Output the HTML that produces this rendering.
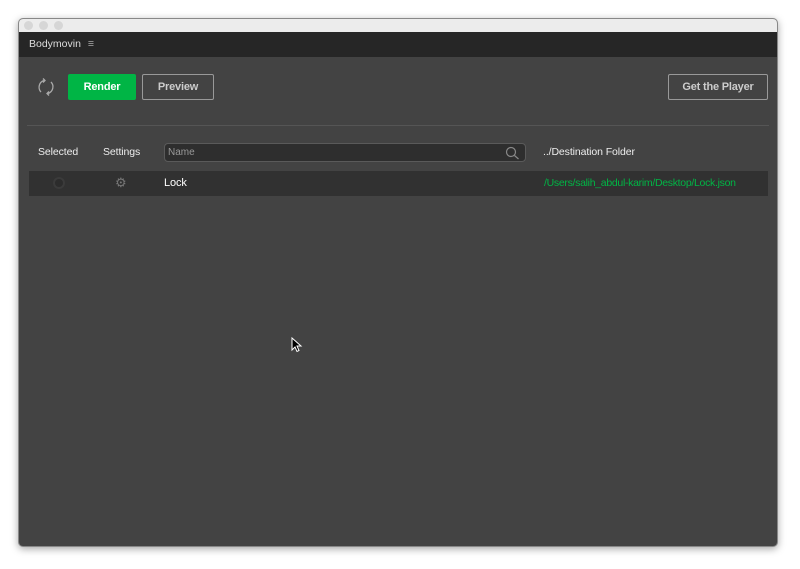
<!DOCTYPE html>
<html><head><style>
*{margin:0;padding:0;box-sizing:border-box}
body{width:800px;height:569px;background:#fff;font-family:"Liberation Sans",Arial,sans-serif;position:relative;overflow:hidden}
.win{position:absolute;left:18px;top:18px;width:760px;height:529px;background:#434343;border-radius:5px;overflow:hidden;box-shadow:0 2px 8px rgba(0,0,0,.35);border:1px solid #888}
.tb{height:13px;background:#ececec;position:relative}
.dot{position:absolute;top:2px;width:9px;height:9px;border-radius:50%;background:#d6d6d6}
.hd{height:25px;background:#262626;color:#ddd;font-size:10.5px;line-height:25px;padding-left:10px}
.abs{position:absolute}
.btn{position:absolute;height:26px;border-radius:2px;font-size:11px;font-weight:bold;text-align:center;line-height:24px;letter-spacing:-.2px}
.lbl{position:absolute;color:#eee;font-size:10.5px;letter-spacing:-.1px}
</style></head><body>
<div class="win">
<div class="tb"><div class="dot" style="left:5px"></div><div class="dot" style="left:20px"></div><div class="dot" style="left:35px"></div></div>
<div class="hd">Bodymovin <span style="color:#aaa;margin-left:4px">≡</span></div>
<svg class="abs" style="left:17px;top:58px" width="20" height="20" viewBox="0 0 20 20" fill="none" stroke="#aaa" stroke-width="1.3"><path d="M5 15A7 7 0 0 1 8 3.5"/><path d="M15 5A7 7 0 0 1 12 16.5"/><path d="M7 1.5l2 2-2 2" /><path d="M13 14.5l-2 2 2 2"/></svg>
<div class="btn" style="left:49px;top:55px;width:68px;background:#00b545;color:#fff;line-height:26px">Render</div>
<div class="btn" style="left:123px;top:55px;width:72px;border:1px solid #999;color:#ccc">Preview</div>
<div class="btn" style="left:649px;top:55px;width:100px;border:1px solid #999;color:#ccc">Get the Player</div>
<div class="abs" style="left:8px;top:106px;width:742px;height:1px;background:#555"></div>
<div class="lbl" style="left:19px;top:127px">Selected</div>
<div class="lbl" style="left:84px;top:127px">Settings</div>
<div class="abs" style="left:145px;top:124px;width:362px;height:19px;border:1px solid #5a5a5a;border-radius:4px;background:#2e2e2e;color:#999;font-size:10px;line-height:17px;padding-left:3px">Name
<svg class="abs" style="right:5px;top:2px" width="15" height="14" viewBox="0 0 15 14" fill="none" stroke="#888" stroke-width="1.2"><circle cx="6" cy="6" r="4.5"/><path d="M9.5 9.5l4 3.5"/></svg></div>
<div class="lbl" style="left:524px;top:127px">../Destination Folder</div>
<div class="abs" style="left:10px;top:152px;width:739px;height:25px;background:#313131"></div>
<div class="abs" style="left:34px;top:158px;width:12px;height:12px;border-radius:50%;border:2px solid #3b3b3b;background:#2c2c2c"></div>
<div class="abs" style="left:96px;top:156px;color:#777;font-size:13px">⚙</div>
<div class="lbl" style="left:145px;top:158px;font-size:11px;color:#fff">Lock</div>
<div class="lbl" style="left:525px;top:158px;color:#00b545;letter-spacing:-.3px">/Users/salih_abdul-karim/Desktop/Lock.json</div>
<svg class="abs" style="left:272px;top:318px" width="12" height="16" viewBox="0 0 12 16"><path d="M1 1v12l3-3 2 4.5 2-1-2-4.5h4z" fill="#000" stroke="#fff" stroke-width="1"/></svg>
</div>
</body></html>
